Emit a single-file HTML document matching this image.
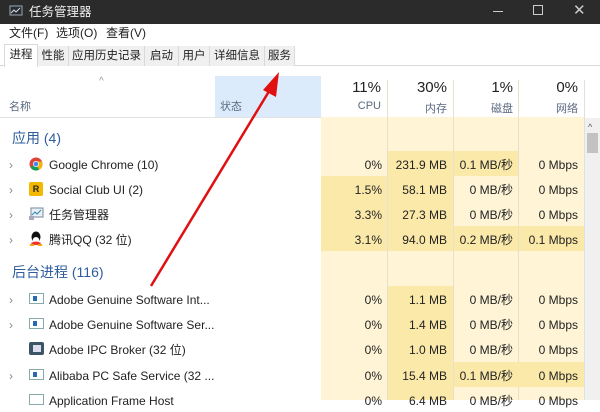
<!DOCTYPE html>
<html><head><meta charset="utf-8"><style>
*{margin:0;padding:0;box-sizing:border-box}
body{width:600px;height:400px;overflow:hidden;background:#fff;font-family:"Liberation Sans","Noto Sans CJK SC",sans-serif;font-size:12px;color:#222;position:relative}
.abs{position:absolute}
span{line-height:15px}
.title{left:0;top:0;width:600px;height:24px;background:#2b2b2b;color:#eee;font-size:12.5px}
.menu{top:24px;left:0;width:600px;height:18px;background:#fff}
.tabs{top:42px;left:0;width:600px;height:24px;background:#fff;border-bottom:1px solid #dadada}
.tab{position:absolute;top:4px;height:20px;background:#f0f0f0;border-right:1px solid #d9d9d9;font-size:11.5px;line-height:20px;text-align:center;color:#222}
.r{text-align:right;position:absolute;font-size:12px}
.hdr{color:#5a6a80;font-size:11px}
.cell{position:absolute}
.row{position:absolute;left:0;height:25px;font-size:12px}
.row span{top:7px}
</style></head><body>
<div class="abs title">
<svg class="abs" style="left:9px;top:5px" width="14" height="13"><rect x="1" y="1" width="12" height="9" fill="none" stroke="#9ab" /><polyline points="2,8 5,5 7,7 11,3" fill="none" stroke="#cde" /></svg>
<span class="abs" style="left:29px;top:5px">任务管理器</span>
<div class="abs" style="left:493px;top:11px;width:10px;height:1px;background:#ccc"></div>
<div class="abs" style="left:533px;top:5px;width:10px;height:10px;border:1px solid #ccc"></div>
<span class="abs" style="left:573px;top:3px;color:#ccc;font-size:15px">✕</span>
</div>
<div class="abs menu"><span class="abs" style="left:9px;top:2px">文件(F)</span><span class="abs" style="left:56px;top:2px">选项(O)</span><span class="abs" style="left:106px;top:2px">查看(V)</span></div>
<div class="abs tabs">
<div class="tab" style="left:4px;width:34px;top:2px;height:23px;background:#fff;border:1px solid #d9d9d9;border-bottom:none">进程</div>
<div class="tab" style="left:38px;width:31px">性能</div>
<div class="tab" style="left:69px;width:76px">应用历史记录</div>
<div class="tab" style="left:145px;width:34px">启动</div>
<div class="tab" style="left:179px;width:31px">用户</div>
<div class="tab" style="left:210px;width:55px">详细信息</div>
<div class="tab" style="left:265px;width:30px">服务</div>
</div>
<div class="abs" style="left:215px;top:76px;width:106px;height:41px;background:#dcebfc"></div>
<div class="abs" style="left:0;top:117px;width:584px;height:1px;background:#e2e2e2"></div>
<span class="abs" style="left:99px;top:74px;color:#999;font-size:10px">^</span>
<span class="abs hdr" style="left:9px;top:100px">名称</span>
<span class="abs hdr" style="left:220px;top:100px">状态</span>
<div class="abs" style="left:321px;top:117px;width:263px;height:283px;background:#fff5d6"></div>
<div class="abs" style="left:387px;top:80px;width:1px;height:320px;background:#e8e0c8"></div>
<div class="abs" style="left:453px;top:80px;width:1px;height:320px;background:#e8e0c8"></div>
<div class="abs" style="left:518px;top:80px;width:1px;height:320px;background:#e8e0c8"></div>
<div class="abs" style="left:584px;top:80px;width:1px;height:320px;background:#e0e0e0"></div>
<div class="r" style="left:321px;width:60px;top:79px;font-size:15px">11%</div><div class="r hdr" style="left:321px;width:60px;top:100px">CPU</div>
<div class="r" style="left:387px;width:60px;top:79px;font-size:15px">30%</div><div class="r hdr" style="left:387px;width:60px;top:100px">内存</div>
<div class="r" style="left:453px;width:60px;top:79px;font-size:15px">1%</div><div class="r hdr" style="left:453px;width:60px;top:100px">磁盘</div>
<div class="r" style="left:518px;width:60px;top:79px;font-size:15px">0%</div><div class="r hdr" style="left:518px;width:60px;top:100px">网络</div>
<div class="abs" style="left:585px;top:118px;width:15px;height:282px;background:#f0f0f0"></div>
<span class="abs" style="left:588px;top:120px;font-size:9px;color:#555">^</span>
<div class="abs" style="left:587px;top:133px;width:11px;height:20px;background:#c2c2c2"></div>
<span class="abs" style="left:12px;top:130px;font-size:14px;line-height:16px;color:#2e5c9c">应用 (4)</span>
<span class="abs" style="left:12px;top:264px;font-size:14px;line-height:16px;color:#2e5c9c">后台进程 (116)</span>
<div class="cell" style="left:321px;top:176px;width:66px;height:75px;background:#fbe9aa"></div>
<div class="cell" style="left:388px;top:151px;width:65px;height:100px;background:#fbe9aa"></div>
<div class="cell" style="left:454px;top:151px;width:64px;height:25px;background:#fbe9aa"></div>
<div class="cell" style="left:454px;top:226px;width:64px;height:25px;background:#fbe9aa"></div>
<div class="cell" style="left:519px;top:226px;width:65px;height:25px;background:#fbe9aa"></div>
<div class="cell" style="left:388px;top:286px;width:65px;height:114px;background:#fbe9aa"></div>
<div class="cell" style="left:454px;top:362px;width:130px;height:25px;background:#fbe9aa"></div>
<div class="row" style="top:151px;width:600px">
<span class="abs" style="left:9px;color:#888">›</span>
<svg class="abs" style="left:29px;top:6px" width="14" height="14"><circle cx="7" cy="7" r="6.5" fill="#db4437"/><path d="M7 7 L1.4 10.2 A6.5 6.5 0 0 0 10 12.8Z" fill="#0f9d58"/><path d="M7 7 L10 12.8 A6.5 6.5 0 0 0 13 4.5 L7 4.5Z" fill="#f4b400"/><circle cx="7" cy="7" r="3" fill="#fff"/><circle cx="7" cy="7" r="2.3" fill="#4285f4"/></svg>
<span class="abs" style="left:49px">Google Chrome (10)</span>
<span class="r" style="left:321px;width:61px">0%</span><span class="r" style="left:387px;width:60px">231.9 MB</span><span class="r" style="left:453px;width:60px">0.1 MB/秒</span><span class="r" style="left:518px;width:60px">0 Mbps</span></div>
<div class="row" style="top:176px;width:600px">
<span class="abs" style="left:9px;color:#888">›</span>
<div class="abs" style="left:29px;top:6px;width:14px;height:14px;background:#f3b800;border-radius:2px;font-size:9px;font-weight:bold;text-align:center;line-height:14px">R</div>
<span class="abs" style="left:49px">Social Club UI (2)</span>
<span class="r" style="left:321px;width:61px">1.5%</span><span class="r" style="left:387px;width:60px">58.1 MB</span><span class="r" style="left:453px;width:60px">0 MB/秒</span><span class="r" style="left:518px;width:60px">0 Mbps</span></div>
<div class="row" style="top:201px;width:600px">
<span class="abs" style="left:9px;color:#888">›</span>
<svg class="abs" style="left:29px;top:6px" width="15" height="14"><rect x="2" y="1" width="12" height="9" fill="#e8f0f8" stroke="#789"/><polyline points="3,8 6,5 8,7 12,3" fill="none" stroke="#38a"/><rect x="0" y="9" width="5" height="4" fill="#aab"/></svg>
<span class="abs" style="left:49px">任务管理器</span>
<span class="r" style="left:321px;width:61px">3.3%</span><span class="r" style="left:387px;width:60px">27.3 MB</span><span class="r" style="left:453px;width:60px">0 MB/秒</span><span class="r" style="left:518px;width:60px">0 Mbps</span></div>
<div class="row" style="top:226px;width:600px">
<span class="abs" style="left:9px;color:#888">›</span>
<svg class="abs" style="left:29px;top:5px" width="14" height="15"><ellipse cx="7" cy="6" rx="4.5" ry="5.5" fill="#111"/><ellipse cx="7" cy="9" rx="3.2" ry="3" fill="#fff"/><path d="M2 12 Q7 9 12 12 L11 14 L3 14Z" fill="#e33"/><ellipse cx="3" cy="14" rx="2.5" ry="1" fill="#f5a400"/><ellipse cx="11" cy="14" rx="2.5" ry="1" fill="#f5a400"/></svg>
<span class="abs" style="left:49px">腾讯QQ (32 位)</span>
<span class="r" style="left:321px;width:61px">3.1%</span><span class="r" style="left:387px;width:60px">94.0 MB</span><span class="r" style="left:453px;width:60px">0.2 MB/秒</span><span class="r" style="left:518px;width:60px">0.1 Mbps</span></div>
<div class="row" style="top:286px;width:600px">
<span class="abs" style="left:9px;color:#888">›</span>
<div class="abs" style="left:29px;top:7px;width:15px;height:11px;border:1px solid #8aa;background:#fff"><div style="margin:2px 3px;width:4px;height:5px;background:#2a68b0"></div></div>
<span class="abs" style="left:49px">Adobe Genuine Software Int...</span>
<span class="r" style="left:321px;width:61px">0%</span><span class="r" style="left:387px;width:60px">1.1 MB</span><span class="r" style="left:453px;width:60px">0 MB/秒</span><span class="r" style="left:518px;width:60px">0 Mbps</span></div>
<div class="row" style="top:311px;width:600px">
<span class="abs" style="left:9px;color:#888">›</span>
<div class="abs" style="left:29px;top:7px;width:15px;height:11px;border:1px solid #8aa;background:#fff"><div style="margin:2px 3px;width:4px;height:5px;background:#2a68b0"></div></div>
<span class="abs" style="left:49px">Adobe Genuine Software Ser...</span>
<span class="r" style="left:321px;width:61px">0%</span><span class="r" style="left:387px;width:60px">1.4 MB</span><span class="r" style="left:453px;width:60px">0 MB/秒</span><span class="r" style="left:518px;width:60px">0 Mbps</span></div>
<div class="row" style="top:336px;width:600px">
<div class="abs" style="left:29px;top:6px;width:15px;height:13px;background:#3b5566;border-radius:2px"><div style="margin:3px 4px;width:8px;height:7px;background:#dde"></div></div>
<span class="abs" style="left:49px">Adobe IPC Broker (32 位)</span>
<span class="r" style="left:321px;width:61px">0%</span><span class="r" style="left:387px;width:60px">1.0 MB</span><span class="r" style="left:453px;width:60px">0 MB/秒</span><span class="r" style="left:518px;width:60px">0 Mbps</span></div>
<div class="row" style="top:362px;width:600px">
<span class="abs" style="left:9px;color:#888">›</span>
<div class="abs" style="left:29px;top:7px;width:15px;height:11px;border:1px solid #8aa;background:#fff"><div style="margin:2px 3px;width:4px;height:5px;background:#2a68b0"></div></div>
<span class="abs" style="left:49px">Alibaba PC Safe Service (32 ...</span>
<span class="r" style="left:321px;width:61px">0%</span><span class="r" style="left:387px;width:60px">15.4 MB</span><span class="r" style="left:453px;width:60px">0.1 MB/秒</span><span class="r" style="left:518px;width:60px">0 Mbps</span></div>
<div class="row" style="top:387px;width:600px">
<div class="abs" style="left:29px;top:7px;width:15px;height:11px;border:1px solid #8aa;background:#fff"></div>
<span class="abs" style="left:49px">Application Frame Host</span>
<span class="r" style="left:321px;width:61px">0%</span><span class="r" style="left:387px;width:60px">6.4 MB</span><span class="r" style="left:453px;width:60px">0 MB/秒</span><span class="r" style="left:518px;width:60px">0 Mbps</span></div>
<svg class="abs" style="left:0;top:0" width="600" height="400"><line x1="151" y1="286" x2="271" y2="88" stroke="#e01010" stroke-width="2.5"/><polygon points="279,72 263,90 276,97" fill="#e01010"/></svg>
</body></html>
